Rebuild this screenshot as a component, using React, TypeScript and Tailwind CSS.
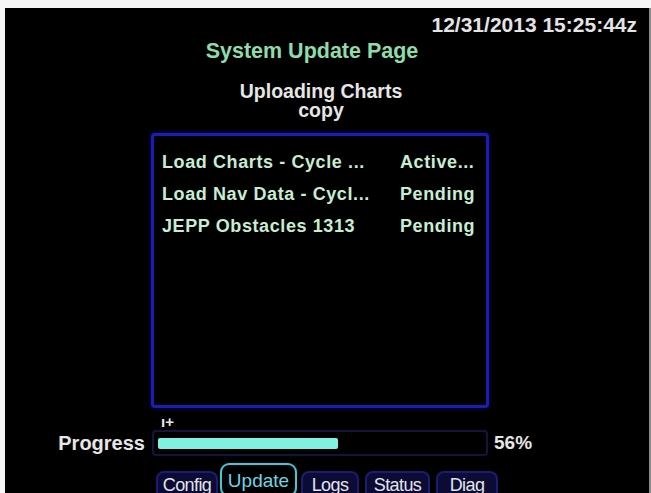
const rows = [
  { name: "Load Charts - Cycle ...", status: "Active..." },
  { name: "Load Nav Data - Cycl...", status: "Pending" },
  { name: "JEPP Obstacles 1313", status: "Pending" },
];

const tabs = [
  { label: "Config", w: "w-[62px]", ml: "ml-0", active: false },
  { label: "Update", w: "w-[77px]", ml: "ml-[2px]", active: true },
  { label: "Logs", w: "w-[58px]", ml: "ml-[4px]", active: false },
  { label: "Status", w: "w-[65px]", ml: "ml-[6px]", active: false },
  { label: "Diag", w: "w-[62px]", ml: "ml-[6px]", active: false },
];

const progress = 56;

export default function App() {
  return (
    <div className="w-[651px] h-[493px] overflow-hidden bg-[#f6f6f6] pt-[8px] pl-[5px] flex font-['Liberation_Sans',Arial,sans-serif]">
      <div className="flex-1 bg-black">
        {/* clock */}
        <div className="pt-[4px] pr-[12px] text-right text-[21px] leading-[25px] font-bold text-[#e4e4e4]">
          12/31/2013 15:25:44z
        </div>

        {/* headings */}
        <div className="pr-[30px] text-center text-[21.5px] leading-[28px] font-bold text-[#8fdcab]">
          System Update Page
        </div>
        <div className="mt-[17px] pr-[12px] text-center text-[19.5px] leading-[19px] font-bold text-[#e6e6e6]">
          <div>Uploading Charts</div>
          <div>copy</div>
        </div>

        {/* task list */}
        <div className="mt-[13px] ml-[146px] w-[338px] h-[275px] border-[3px] border-[#1c1cb8] rounded-[4px] shadow-[0_0_5px_#2424ff66] pt-[10px] pl-[8px]">
          {rows.map((r) => (
            <div
              key={r.name}
              className="flex text-[18px] leading-[32px] font-bold tracking-[0.6px] text-[#c6eed2]"
            >
              <span className="w-[238px] whitespace-nowrap">{r.name}</span>
              <span className="whitespace-nowrap">{r.status}</span>
            </div>
          ))}
        </div>

        {/* marker */}
        <div className="h-[22px] pl-[156px] pt-[6px] text-[15px] leading-[16px] font-bold text-[#e8e8e8]">
          ı+
        </div>

        {/* progress */}
        <div className="flex items-center h-[26px]">
          <div className="w-[147px] pr-[7px] text-right text-[20px] leading-[24px] font-bold text-[#e6e6e6]">
            Progress
          </div>
          <div className="w-[336px] h-[26px] border-2 border-[#14143c] rounded-[4px] flex items-center px-[4px]">
            <div
              className="h-[11px] bg-[#80f0e0] rounded-[2px]"
              style={{ width: `${(progress / 100) * 322}px` }}
            />
          </div>
          <div className="pl-[6px] text-[19px] leading-[24px] font-bold text-[#e6e6e6]">
            {progress}%
          </div>
        </div>

        {/* tabs */}
        <div className="mt-[7px] ml-[151px] flex items-start">
          {tabs.map((t) =>
            t.active ? (
              <div
                key={t.label}
                className={`${t.w} ${t.ml} h-[34px] border-2 border-[#3ec8da] rounded-[9px] bg-black text-center pt-[5px] text-[19px] leading-[22px] text-[#6cd6e6]`}
              >
                {t.label}
              </div>
            ) : (
              <div
                key={t.label}
                className={`${t.w} ${t.ml} mt-[8px] h-[30px] border-2 border-[#1c1c72] rounded-t-[8px] bg-[#0b0b36] text-center pt-[2px] text-[18px] leading-[20px] tracking-[-0.6px] text-[#e4e4e4]`}
              >
                {t.label}
              </div>
            )
          )}
        </div>
      </div>
      <div className="w-[2px] bg-[#8a8a8a]" />
    </div>
  );
}
